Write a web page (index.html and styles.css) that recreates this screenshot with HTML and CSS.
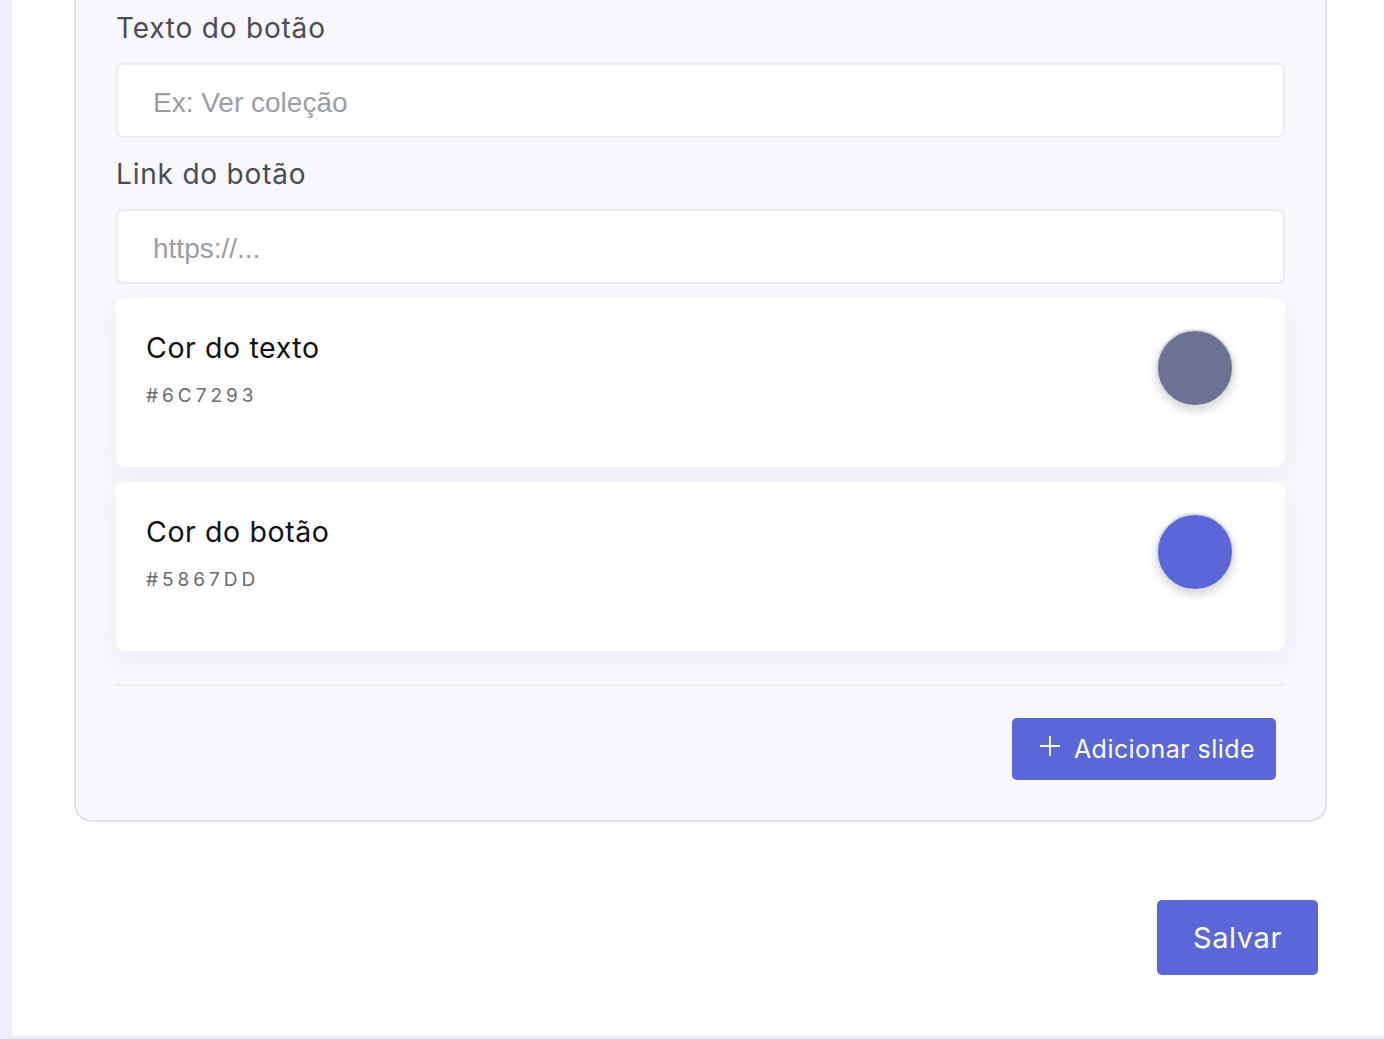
FILE: index.html
```html
<!DOCTYPE html>
<html lang="pt-BR">
<head>
<meta charset="utf-8">
<title>Slides</title>
<link rel="stylesheet" href="styles.css">
</head>
<body>
<div class="page">
  <section class="slide-card">
    <div class="field">
      <label class="field-label" for="btn-text">Texto do botão</label>
      <input class="field-input" id="btn-text" type="text" placeholder="Ex: Ver coleção">
    </div>
    <div class="field">
      <label class="field-label" for="btn-link">Link do botão</label>
      <input class="field-input" id="btn-link" type="text" placeholder="https://...">
    </div>
    <div class="color-list">
      <div class="color-card">
        <div class="color-info">
          <div class="color-title">Cor do texto</div>
          <div class="color-hex">#6C7293</div>
        </div>
        <div class="color-swatch swatch-text"></div>
      </div>
      <div class="color-card">
        <div class="color-info">
          <div class="color-title">Cor do botão</div>
          <div class="color-hex">#5867DD</div>
        </div>
        <div class="color-swatch swatch-button"></div>
      </div>
    </div>
    <hr class="divider">
    <div class="card-actions">
      <button class="btn btn-add" type="button">
        <svg class="plus-icon" viewBox="0 0 22 22" width="22" height="22" aria-hidden="true"><path d="M11 1v20M1 11h20" stroke="#fff" stroke-width="1.8" fill="none"/></svg>
        <span>Adicionar slide</span>
      </button>
    </div>
  </section>
  <div class="page-actions">
    <button class="btn btn-save" type="button">Salvar</button>
  </div>
</div>
</body>
</html>
```

FILE: styles.css
```css
* { box-sizing: border-box; }

html, body {
  margin: 0;
  padding: 0;
}

body {
  background: #eeeef8;
  font-family: Inter, "Noto Sans", sans-serif;
  height: 1039px;
  overflow: hidden;
}

.page {
  margin-left: 12px;
  height: 1036px;
  background: #ffffff;
  overflow: hidden;
}

.slide-card {
  margin: -32px 57px 0 62px;
  padding: 40px 40px 40px 40px;
  background: #f7f7fc;
  border: 2px solid #e1e1f0;
  border-radius: 18px;
}

.field {
  display: flex;
  flex-direction: column;
  margin-bottom: 18px;
}

.field-label {
  font-size: 28px;
  line-height: 36px;
  letter-spacing: 0.8px;
  color: #4b4b55;
  margin-bottom: 17px;
}

.field-input {
  height: 75px;
  width: 100%;
  border: 2px solid #ececf3;
  border-radius: 7px;
  background: #ffffff;
  padding: 4px 0 0 35px;
  font-family: "Liberation Sans", Arial, sans-serif;
  font-size: 28px;
  color: #333;
  outline: none;
}

.field-input::placeholder {
  color: #9c9ca6;
}

.field + .color-list {
  margin-top: -4px;
}

.color-list {
  display: flex;
  flex-direction: column;
  gap: 15px;
}

.color-card {
  height: 169px;
  background: #ffffff;
  border-radius: 9px;
  box-shadow: 0 8px 22px rgba(40, 40, 110, 0.05);
  display: flex;
  justify-content: space-between;
  align-items: flex-start;
  padding: 31px 51px 0 30px;
}

.color-info {
  padding-top: 2px;
}

.color-title {
  font-size: 28.5px;
  line-height: 34px;
  letter-spacing: 0.6px;
  color: #111114;
}

.color-hex {
  margin-top: 19px;
  font-size: 19px;
  line-height: 24px;
  letter-spacing: 4px;
  color: #6a6a72;
}

.color-swatch {
  width: 78px;
  height: 78px;
  border-radius: 50%;
  border: 2px solid #dedee2;
  box-shadow: 0 4px 10px rgba(0, 0, 0, 0.16);
}

.swatch-text { background: #6c7293; }
.swatch-button { background: #5b67d8; }

.divider {
  margin: 33px 0 0 0;
  border: 0;
  height: 2px;
  background: #ececf3;
}

.card-actions {
  display: flex;
  justify-content: flex-end;
  margin-top: 32px;
  padding-right: 9px;
}

.btn {
  border: 0;
  background: #5b67d8;
  color: #ffffff;
  font-family: Inter, "Noto Sans", sans-serif;
  border-radius: 5px;
  cursor: pointer;
  display: inline-flex;
  align-items: center;
  justify-content: center;
}

.btn-add {
  width: 264px;
  height: 62px;
  gap: 13px;
  font-size: 25px;
  letter-spacing: 0.45px;
  padding: 0 0 0 6px;
}

.plus-icon {
  width: 22px;
  height: 22px;
  margin-top: -6px;
}

.page-actions {
  display: flex;
  justify-content: flex-end;
  margin-top: 78px;
  padding-right: 66px;
}

.btn-save {
  width: 161px;
  height: 75px;
  font-size: 29px;
  letter-spacing: 0.6px;
}
```
